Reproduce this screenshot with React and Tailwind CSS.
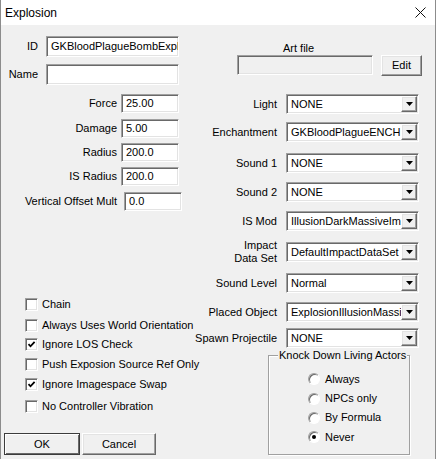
import React from "react";

// Classic Win32 3D edges
const sunken =
  "border border-t-[#a0a0a0] border-l-[#a0a0a0] border-b-white border-r-white shadow-[inset_1px_1px_0_#696969,inset_-1px_-1px_0_#e3e3e3]";
const raised =
  "border border-t-white border-l-white border-b-[#696969] border-r-[#696969] shadow-[inset_-1px_-1px_0_#a0a0a0,inset_1px_1px_0_#e3e3e3]";

function TextBox({ className, children }) {
  return (
    <div
      className={`${sunken} bg-white flex items-center pl-[4px] overflow-hidden whitespace-nowrap ${className}`}
    >
      {children}
    </div>
  );
}

function Combo({ children }) {
  return (
    <div className={`${sunken} bg-white flex items-stretch w-[133px] h-[20px] ml-[9px]`}>
      <div className="flex-1 flex items-center pl-[4px] overflow-hidden whitespace-nowrap">
        {children}
      </div>
      <div className={`${raised} bg-[#f0f0f0] w-[16px] my-[1px] mr-[1px] flex items-center justify-center shrink-0`}>
        <svg width="7" height="4" viewBox="0 0 7 4">
          <path d="M0 0 H7 L3.5 4 Z" fill="#000" />
        </svg>
      </div>
    </div>
  );
}

function NumRow({ label, value, className, boxClass = "ml-[4px]" }) {
  return (
    <div className={`flex items-center h-[19px] ${className}`}>
      <span className="w-[116px] text-right">{label}</span>
      <TextBox className={`${boxClass} w-[58px] h-[19px]`}>{value}</TextBox>
    </div>
  );
}

function ComboRow({ label, value, className }) {
  return (
    <div className={`flex items-center h-[20px] ${className}`}>
      <div className="w-[87px] text-right leading-[13px] shrink-0">{label}</div>
      <Combo>{value}</Combo>
    </div>
  );
}

function Check({ label, checked, className }) {
  return (
    <div className={`flex items-center h-[20px] pl-[24px] ${className}`}>
      <div className={`${sunken} bg-white w-[13px] h-[13px] flex items-center justify-center shrink-0`}>
        {checked && (
          <svg width="9" height="9" viewBox="0 0 9 9">
            <path d="M1.5 4.2 L3.5 6.3 L7.6 1.8" fill="none" stroke="#000" strokeWidth="1.8" />
          </svg>
        )}
      </div>
      <span className="ml-[4px] whitespace-nowrap">{label}</span>
    </div>
  );
}

function Radio({ label, checked, className }) {
  return (
    <div className={`flex items-center ${className}`}>
      <div className="w-[12px] h-[12px] rounded-full bg-white border border-t-[#a0a0a0] border-l-[#a0a0a0] border-b-white border-r-white shadow-[inset_1px_1px_0_#696969] flex items-center justify-center shrink-0">
        {checked && <div className="w-[4px] h-[4px] rounded-full bg-black" />}
      </div>
      <span className="ml-[5px]">{label}</span>
    </div>
  );
}

export default function App() {
  return (
    <div className="w-[436px] h-[459px] bg-[#f0f0f0] border-x border-[#8c8c8c] flex flex-col text-[11px] text-black font-['Liberation_Sans',Arial,sans-serif] overflow-hidden select-none">
      {/* title bar */}
      <div className="h-[25px] bg-white flex items-center justify-between pl-[4px] pr-[9px] shrink-0">
        <span className="text-[12px]">Explosion</span>
        <svg width="11" height="11" viewBox="0 0 11 11">
          <path d="M0.5 0.5 L10.5 10.5 M10.5 0.5 L0.5 10.5" stroke="#111" strokeWidth="1" />
        </svg>
      </div>

      <div className="flex flex-1">
        {/* left column */}
        <div className="w-[189px] shrink-0 flex flex-col">
          <div className="mt-[11px] flex items-center h-[21px]">
            <span className="w-[37px] text-right">ID</span>
            <TextBox className="ml-[8px] w-[133px] h-[21px]">GKBloodPlagueBombExplosion</TextBox>
          </div>
          <div className="mt-[7px] flex items-center h-[21px]">
            <span className="w-[37px] text-right">Name</span>
            <TextBox className="ml-[8px] w-[133px] h-[21px]" />
          </div>

          <NumRow label="Force" value="25.00" className="mt-[9px]" />
          <NumRow label="Damage" value="5.00" className="mt-[6px]" />
          <NumRow label="Radius" value="200.0" className="mt-[5px]" />
          <NumRow label="IS Radius" value="200.0" className="mt-[5px]" />
          <NumRow label="Vertical Offset Mult" value="0.0" className="mt-[6px]" boxClass="ml-[7px]" />

          <Check label="Chain" className="mt-[83px]" />
          <Check label="Always Uses World Orientation" className="mt-[1px]" />
          <Check label="Ignore LOS Check" checked className="-mt-[1px]" />
          <Check label="Push Exposion Source Ref Only" />
          <Check label="Ignore Imagespace Swap" checked />
          <Check label="No Controller Vibration" className="mt-[2px]" />

          <div className="flex mt-[17px] ml-[3px] gap-[2px]">
            <button className="w-[76px] h-[22px] bg-[#f0f0f0] border border-[#3c3c3c] shadow-[inset_1px_1px_0_#fff,inset_-1px_-1px_0_#696969] flex items-center justify-center">
              OK
            </button>
            <button className={`${raised} w-[74px] h-[22px] bg-[#f0f0f0] flex items-center justify-center`}>
              Cancel
            </button>
          </div>
        </div>

        {/* right column */}
        <div className="flex flex-col">
          <div className="ml-[47px] mt-[17px]">
            <div className="leading-[13px] h-[13px] pl-[46px]">Art file</div>
            <div className="flex items-start">
              <div className={`${sunken} bg-[#f0f0f0] w-[136px] h-[20px]`} />
              <button className={`${raised} ml-[8px] w-[41px] h-[21px] bg-[#f0f0f0] flex items-center justify-center`}>
                Edit
              </button>
            </div>
          </div>

          <ComboRow label="Light" value="NONE" className="mt-[18px]" />
          <ComboRow label="Enchantment" value="GKBloodPlagueENCH" className="mt-[8px]" />
          <ComboRow label="Sound 1" value="NONE" className="mt-[11px]" />
          <ComboRow label="Sound 2" value="NONE" className="mt-[9px]" />
          <ComboRow label="IS Mod" value="IllusionDarkMassiveImod" className="mt-[9px]" />
          <ComboRow
            label={
              <>
                Impact
                <br />
                Data Set
              </>
            }
            value="DefaultImpactDataSet"
            className="mt-[11px]"
          />
          <ComboRow label="Sound Level" value="Normal" className="mt-[11px]" />
          <ComboRow label="Placed Object" value="ExplosionIllusionMassive" className="mt-[9px]" />
          <ComboRow label="Spawn Projectile" value="NONE" className="mt-[6px]" />

          {/* group box */}
          <div className="ml-[78px] mt-[7px] w-[142px] h-[100px] border border-[#a0a0a0] shadow-[inset_1px_1px_0_#fff,1px_1px_0_#fff] flex flex-col">
            <span className="-mt-[8px] ml-[9px] px-[1px] self-start bg-[#f0f0f0] leading-[14px] whitespace-nowrap">
              Knock Down Living Actors
            </span>
            <div className="flex flex-col pl-[39px] mt-[7px]">
              <Radio label="Always" className="h-[20px]" />
              <Radio label="NPCs only" className="h-[19px]" />
              <Radio label="By Formula" className="h-[19px]" />
              <Radio label="Never" checked className="h-[20px]" />
            </div>
          </div>
        </div>
      </div>
    </div>
  );
}
